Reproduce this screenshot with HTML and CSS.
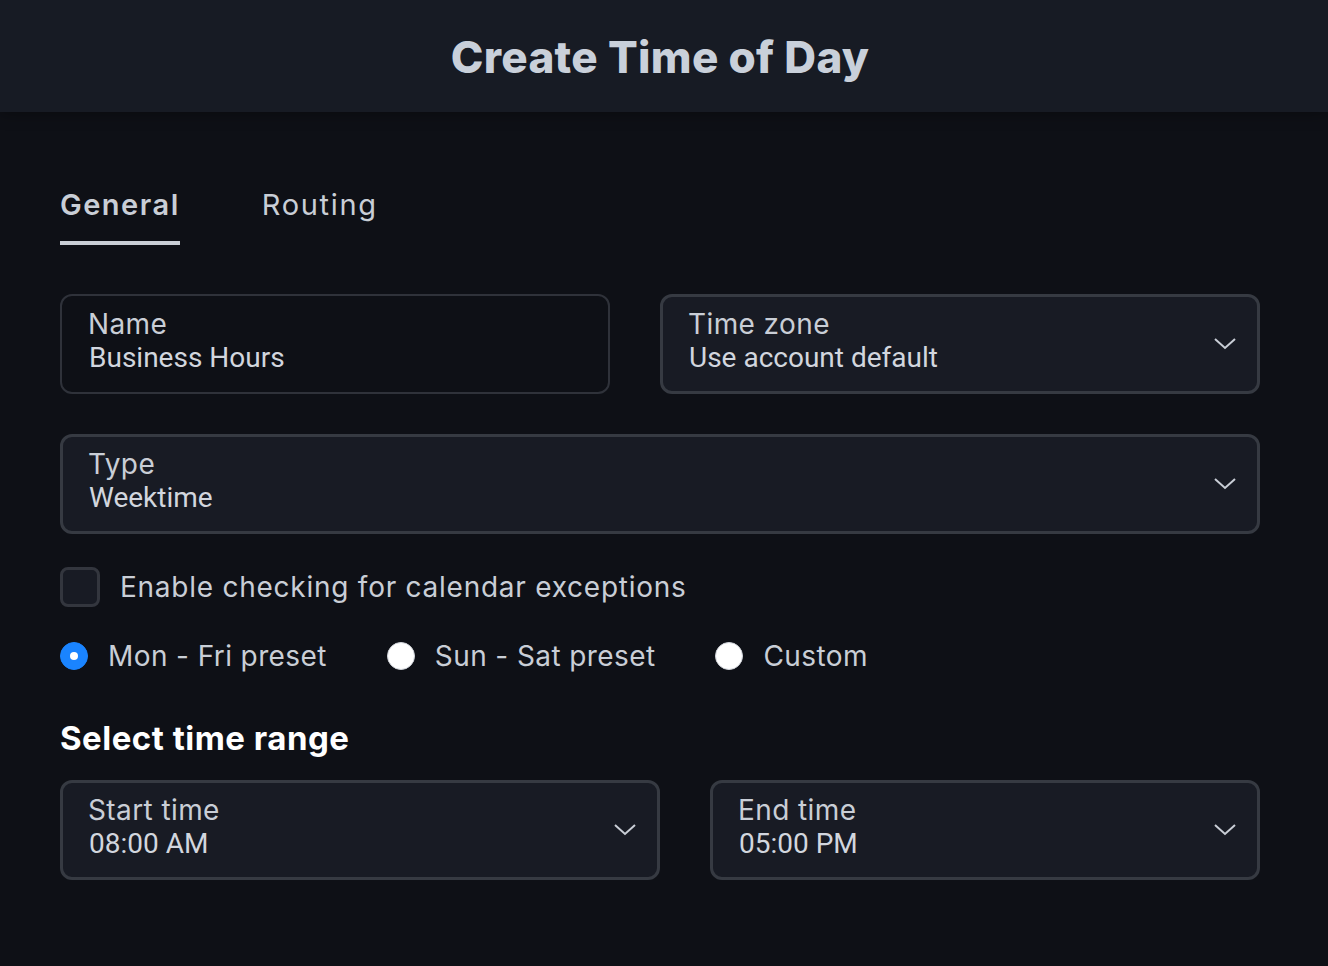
FILE: index.html
```html
<!DOCTYPE html>
<html lang="en">
<head>
<meta charset="utf-8">
<title>Create Time of Day</title>
<link rel="stylesheet" href="styles.css">
</head>
<body>
<header class="header">
  <h1 class="title">Create Time of Day</h1>
</header>
<main class="content">
  <nav class="tabs">
    <div class="tab tab-active">General</div>
    <div class="tab">Routing</div>
  </nav>

  <div class="row row-top">
    <div class="field field-input">
      <div class="field-text">
        <div class="field-label">Name</div>
        <div class="field-value">Business Hours</div>
      </div>
    </div>
    <div class="field field-select">
      <div class="field-text">
        <div class="field-label">Time zone</div>
        <div class="field-value">Use account default</div>
      </div>
      <svg class="chevron" width="24" height="14" viewBox="0 0 24 14"><path d="M2 2 L12 11 L22 2" fill="none" stroke="#c9ced6" stroke-width="2"/></svg>
    </div>
  </div>

  <div class="field field-select field-full">
    <div class="field-text">
      <div class="field-label">Type</div>
      <div class="field-value">Weektime</div>
    </div>
    <svg class="chevron" width="24" height="14" viewBox="0 0 24 14"><path d="M2 2 L12 11 L22 2" fill="none" stroke="#c9ced6" stroke-width="2"/></svg>
  </div>

  <label class="check-row">
    <span class="checkbox"></span>
    <span class="check-text">Enable checking for calendar exceptions</span>
  </label>

  <div class="radio-row">
    <div class="radio-item"><span class="radio radio-on"></span><span class="radio-text">Mon - Fri preset</span></div>
    <div class="radio-item"><span class="radio"></span><span class="radio-text">Sun - Sat preset</span></div>
    <div class="radio-item"><span class="radio"></span><span class="radio-text">Custom</span></div>
  </div>

  <h2 class="section-title">Select time range</h2>

  <div class="row row-time">
    <div class="field field-select">
      <div class="field-text">
        <div class="field-label">Start time</div>
        <div class="field-value">08:00 AM</div>
      </div>
      <svg class="chevron" width="24" height="14" viewBox="0 0 24 14"><path d="M2 2 L12 11 L22 2" fill="none" stroke="#c9ced6" stroke-width="2"/></svg>
    </div>
    <div class="field field-select">
      <div class="field-text">
        <div class="field-label">End time</div>
        <div class="field-value">05:00 PM</div>
      </div>
      <svg class="chevron" width="24" height="14" viewBox="0 0 24 14"><path d="M2 2 L12 11 L22 2" fill="none" stroke="#c9ced6" stroke-width="2"/></svg>
    </div>
  </div>
</main>
</body>
</html>
```

FILE: styles.css
```css
* { box-sizing: border-box; }
html, body { margin: 0; padding: 0; }
body {
  background: #0e1016;
  color: #c9ced6;
  font-family: Inter, "Noto Sans", sans-serif;
  width: 1328px;
  height: 966px;
  overflow: hidden;
}
.header {
  height: 112px;
  background: #171b24;
  display: flex;
  align-items: center;
  justify-content: center;
  box-shadow: 0 2px 14px rgba(0, 0, 0, 0.35);
  position: relative;
}
.title {
  margin: 0;
  font-size: 44px;
  font-weight: 800;
  color: #c9d0da;
  letter-spacing: 0.3px;
  padding-top: 2px;
  padding-right: 8px;
}
.content {
  padding: 0 68px 0 60px;
}
.tabs {
  display: flex;
  gap: 82px;
  padding-top: 75px;
}
.tab {
  font-size: 29px;
  font-weight: 400;
  letter-spacing: 1.7px;
  color: #c9ced6;
  height: 58px;
  line-height: 36px;
}
.tab-active {
  font-weight: 600;
  letter-spacing: 1.5px;
  border-bottom: 4px solid #c9ced6;
}
.row {
  display: flex;
  gap: 50px;
}
.row-top { margin-top: 49px; }
.row-top .field-input { width: 550px; }
.row-top .field-select { width: 600px; }
.row-time { margin-top: 22px; }
.row-time .field:first-child { width: 600px; }
.row-time .field:last-child { width: 550px; }
.field {
  height: 100px;
  border-radius: 12px;
  display: flex;
  align-items: center;
  justify-content: space-between;
  padding: 0 20px 6px 26px;
}
.field-input {
  background: #0e1016;
  border: 2px solid #2f323a;
}
.field-select {
  background: #181b24;
  border: 3px solid #363a42;
  padding-left: 25px;
}
.field-full { width: 1200px; margin-top: 40px; }
.field-text { display: flex; flex-direction: column; }
.field-label {
  font-size: 28px;
  letter-spacing: 0.4px;
  line-height: 34px;
  color: #c9ced6;
}
.field-value {
  font-family: Roboto, "Liberation Sans", sans-serif;
  font-size: 28px;
  line-height: 34px;
  color: #d2d6de;
  padding-left: 1px;
}
.chevron { display: block; margin-top: 6px; }
.check-row {
  display: flex;
  align-items: center;
  gap: 20px;
  margin-top: 33px;
  height: 40px;
}
.checkbox {
  width: 40px;
  height: 40px;
  border-radius: 8px;
  background: #181b24;
  border: 3px solid #33363e;
}
.check-text {
  font-size: 28px;
  letter-spacing: 0.75px;
  color: #c9ced6;
}
.radio-row {
  display: flex;
  align-items: center;
  gap: 60px;
  margin-top: 29px;
  height: 40px;
}
.radio-item {
  display: flex;
  align-items: center;
  gap: 20px;
}
.radio {
  width: 28px;
  height: 28px;
  border-radius: 50%;
  background: #ffffff;
  border: 1px solid #d0d4da;
  display: block;
  position: relative;
}
.radio-on {
  background: #1a84ff;
  border-color: #1a84ff;
}
.radio-on::after {
  content: "";
  position: absolute;
  left: 50%;
  top: 50%;
  width: 8px;
  height: 8px;
  margin: -4px 0 0 -4px;
  border-radius: 50%;
  background: #ffffff;
}
.radio-text {
  font-size: 28px;
  letter-spacing: 0.4px;
  color: #c9ced6;
}
.section-title {
  margin: 42px 0 0 0;
  font-size: 33px;
  font-weight: 700;
  letter-spacing: 0.5px;
  color: #ffffff;
  line-height: 40px;
}
```
